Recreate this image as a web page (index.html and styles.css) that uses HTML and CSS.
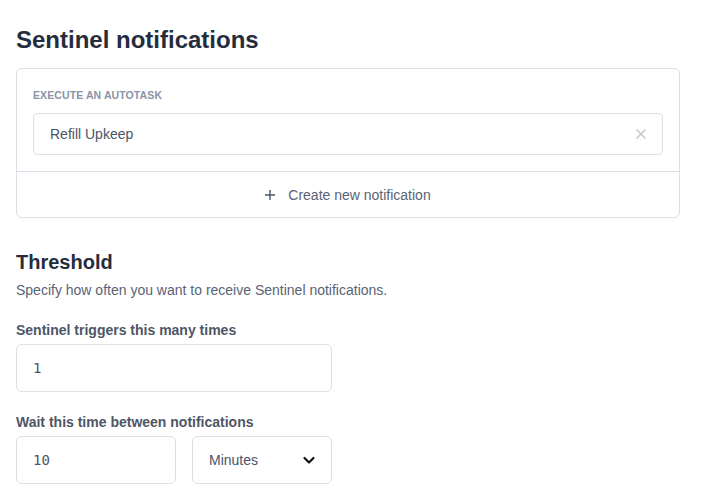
FILE: index.html
```html
<!DOCTYPE html>
<html>
<head>
<meta charset="utf-8">
<link rel="stylesheet" href="styles.css">
</head>
<body>
<div class="page">
  <h2 class="title">Sentinel notifications</h2>
  <div class="card">
    <div class="card-body">
      <div class="caption">Execute an Autotask</div>
      <div class="select-box">
        <span>Refill Upkeep</span>
        <svg class="clear" width="12" height="12" viewBox="0 0 12 12"><path d="M1.5 1.5 L10.5 10.5 M10.5 1.5 L1.5 10.5" stroke="#c4c8cf" stroke-width="1.6" fill="none"/></svg>
      </div>
    </div>
    <div class="card-foot">
      <svg width="10" height="10" viewBox="0 0 10 10"><path d="M5 0 V10 M0 5 H10" stroke="#4a5568" stroke-width="1.4" fill="none"/></svg>
      <span>Create new notification</span>
    </div>
  </div>

  <h3 class="subtitle">Threshold</h3>
  <p class="desc">Specify how often you want to receive Sentinel notifications.</p>

  <div class="field">
    <label class="label">Sentinel triggers this many times</label>
    <div class="input wide"><span class="mono">1</span></div>
  </div>

  <div class="field">
    <label class="label">Wait this time between notifications</label>
    <div class="row">
      <div class="input half"><span class="mono">10</span></div>
      <div class="input half dropdown">
        <span>Minutes</span>
        <svg width="14" height="14" viewBox="0 0 14 14"><path d="M2.5 5 L7 9.5 L11.5 5" stroke="#111" stroke-width="2.2" fill="none" stroke-linecap="round" stroke-linejoin="round"/></svg>
      </div>
    </div>
  </div>
</div>
</body>
</html>
```

FILE: styles.css
```css
* { box-sizing: border-box; }
body {
  margin: 0;
  background: #fff;
  font-family: "Liberation Sans", Arial, sans-serif;
  color: #4a5568;
}
.page {
  padding: 24px 26px 0 16px;
  width: 706px;
}
.title {
  margin: 0 0 12px;
  font-size: 24px;
  line-height: 32px;
  font-weight: 700;
  color: #252d3d;
}
.card {
  width: 664px;
  border: 1px solid #dcdfe6;
  border-radius: 6px;
}
.card-body {
  padding: 20px 16px 16px;
  border-bottom: 1px solid #dcdfe6;
}
.caption {
  font-size: 10.5px;
  font-weight: 700;
  text-transform: uppercase;
  color: #8a93a6;
  line-height: 12px;
  margin-bottom: 12px;
  letter-spacing: 0.1px;
}
.select-box {
  height: 42px;
  border: 1px solid #dcdfe6;
  border-radius: 4px;
  display: flex;
  align-items: center;
  justify-content: space-between;
  padding: 0 15px 0 16px;
  font-size: 14px;
  color: #4a5568;
}
.card-foot {
  height: 45px;
  display: flex;
  align-items: center;
  justify-content: center;
  gap: 13px;
  font-size: 14px;
  color: #5a6374;
}
.subtitle {
  margin: 31px 0 0;
  font-size: 20px;
  line-height: 26px;
  font-weight: 700;
  color: #252d3d;
}
.desc {
  margin: 5px 0 0;
  font-size: 14px;
  line-height: 20px;
  color: #5a6374;
}
.field { margin-top: 20px; }
.label {
  display: block;
  font-size: 14px;
  font-weight: 700;
  color: #4e5666;
  line-height: 20px;
  margin-bottom: 4px;
}
.input {
  height: 48px;
  border: 1px solid #dcdfe6;
  border-radius: 6px;
  display: flex;
  align-items: center;
  padding: 0 16px;
  font-size: 14px;
  color: #4a5568;
}
.wide { width: 316px; }
.row { display: flex; gap: 16px; }
.half { width: 160px; }
.half.dropdown { width: 140px; justify-content: space-between; padding-right: 15px; }
.mono {
  font-family: "DejaVu Sans Mono", monospace;
  font-size: 14px;
  color: #4a5568;
}
```
